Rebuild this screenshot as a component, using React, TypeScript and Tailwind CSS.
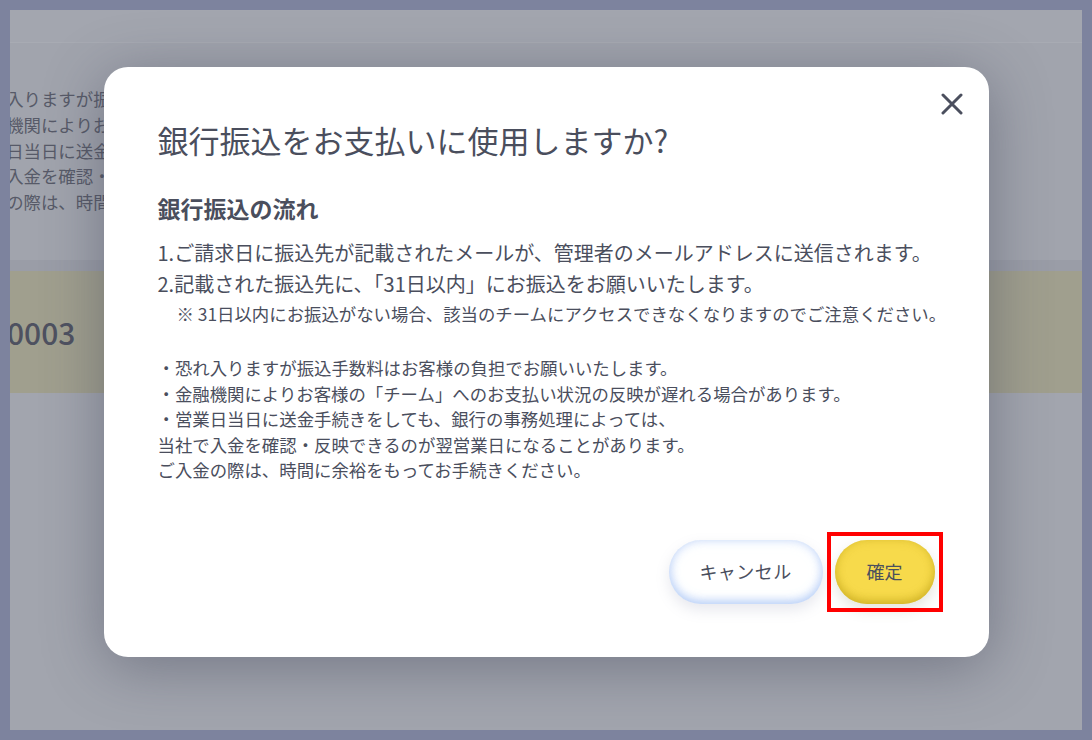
import React from 'react';

const font = { fontFamily: '"Hiragino Sans", "Noto Sans CJK JP", "Noto Sans", sans-serif' };

const notes = [
    '・恐れ入りますが振込手数料はお客様の負担でお願いいたします。',
    '・金融機関によりお客様の「チーム」へのお支払い状況の反映が遅れる場合があります。',
    '・営業日当日に送金手続きをしても、銀行の事務処理によっては、',
    '当社で入金を確認・反映できるのが翌営業日になることがあります。',
    'ご入金の際は、時間に余裕をもってお手続きください。',
];

const CloseIcon: React.FC = () => (
    <svg width="22" height="22" viewBox="0 0 22 22" fill="none">
        <path d="M2 2L20 20M20 2L2 20" stroke="#4b4f5e" strokeWidth="3" strokeLinecap="round" />
    </svg>
);

const App: React.FC = () => {
    return (
        <div className="h-[740px] w-full bg-[#7d839e] p-[10px]" style={font}>
            <div className="relative h-full w-full overflow-hidden bg-[#a2a5ae]">
                {/* page behind the dialog (already dimmed) */}
                <div className="h-[33px] border-b border-[#a8abb3] bg-[#a3a6af]"></div>
                <div className="h-[217px] overflow-hidden bg-[#a1a4ad] pt-[43px]">
                    <div className="ml-[-56px] whitespace-nowrap text-[17.4px] leading-[25.75px] text-[#575a68]">
                        {notes.map((n, i) => (
                            <div key={i}>{n}</div>
                        ))}
                    </div>
                </div>
                <div className="h-[11px] bg-[#9a9da7]"></div>
                <div className="flex h-[122px] items-center overflow-hidden bg-[#a09f8e]">
                    <span className="ml-[-3px] text-[30px] font-medium text-[#4e5160]">0003</span>
                </div>

                {/* dialog */}
                <div className="absolute inset-0 flex justify-center pt-[57px]">
                    <div className="relative h-[590px] w-[885px] rounded-[24px] bg-white px-[54px] pt-[51px] text-[#4a4e5d] shadow-[0_10px_60px_rgba(60,64,85,0.45)]">
                        <button className="absolute right-[26px] top-[26px] flex h-[22px] w-[22px] items-center justify-center">
                            <CloseIcon />
                        </button>
                        <h2 className="text-[31px] leading-[44px]">銀行振込をお支払いに使用しますか?</h2>
                        <h3 className="mt-[30px] text-[23px] font-bold leading-[32px]">銀行振込の流れ</h3>
                        <div className="mt-[13px] whitespace-nowrap text-[20px] leading-[31px]">
                            <p>1.ご請求日に振込先が記載されたメールが、管理者のメールアドレスに送信されます。</p>
                            <p>2.記載された振込先に、「31日以内」にお振込をお願いいたします。</p>
                        </div>
                        <p className="whitespace-nowrap pl-[19px] text-[17.4px] leading-[30px]">※ 31日以内にお振込がない場合、該当のチームにアクセスできなくなりますのでご注意ください。</p>
                        <div className="mt-[26px] whitespace-nowrap text-[17.4px] leading-[25.5px]">
                            {notes.map((n, i) => (
                                <p key={i}>{n}</p>
                            ))}
                        </div>
                        <div className="mt-[57px] flex items-center justify-end gap-[12px]">
                            <button className="h-[64px] w-[154px] rounded-full bg-white text-[18px] tracking-wide text-[#4b4f5e] shadow-[inset_0_-3px_10px_rgba(170,198,245,0.75),inset_0_0_12px_rgba(195,215,250,0.6),0_6px_14px_rgba(120,130,160,0.18)]">
                                キャンセル
                            </button>
                            <div className="relative">
                                <button className="block h-[64px] w-[100px] rounded-full bg-[#f7da4b] text-[18px] text-[#4b4f5e] shadow-[inset_0_-4px_9px_rgba(190,160,20,0.55),inset_0_0_10px_rgba(210,180,40,0.4),0_6px_14px_rgba(120,120,80,0.2)]">
                                    確定
                                </button>
                                {/* annotation box */}
                                <div className="pointer-events-none absolute -inset-[8px] border-4 border-[#ff0000]"></div>
                            </div>
                        </div>
                    </div>
                </div>
            </div>
        </div>
    );
};

export default App;
